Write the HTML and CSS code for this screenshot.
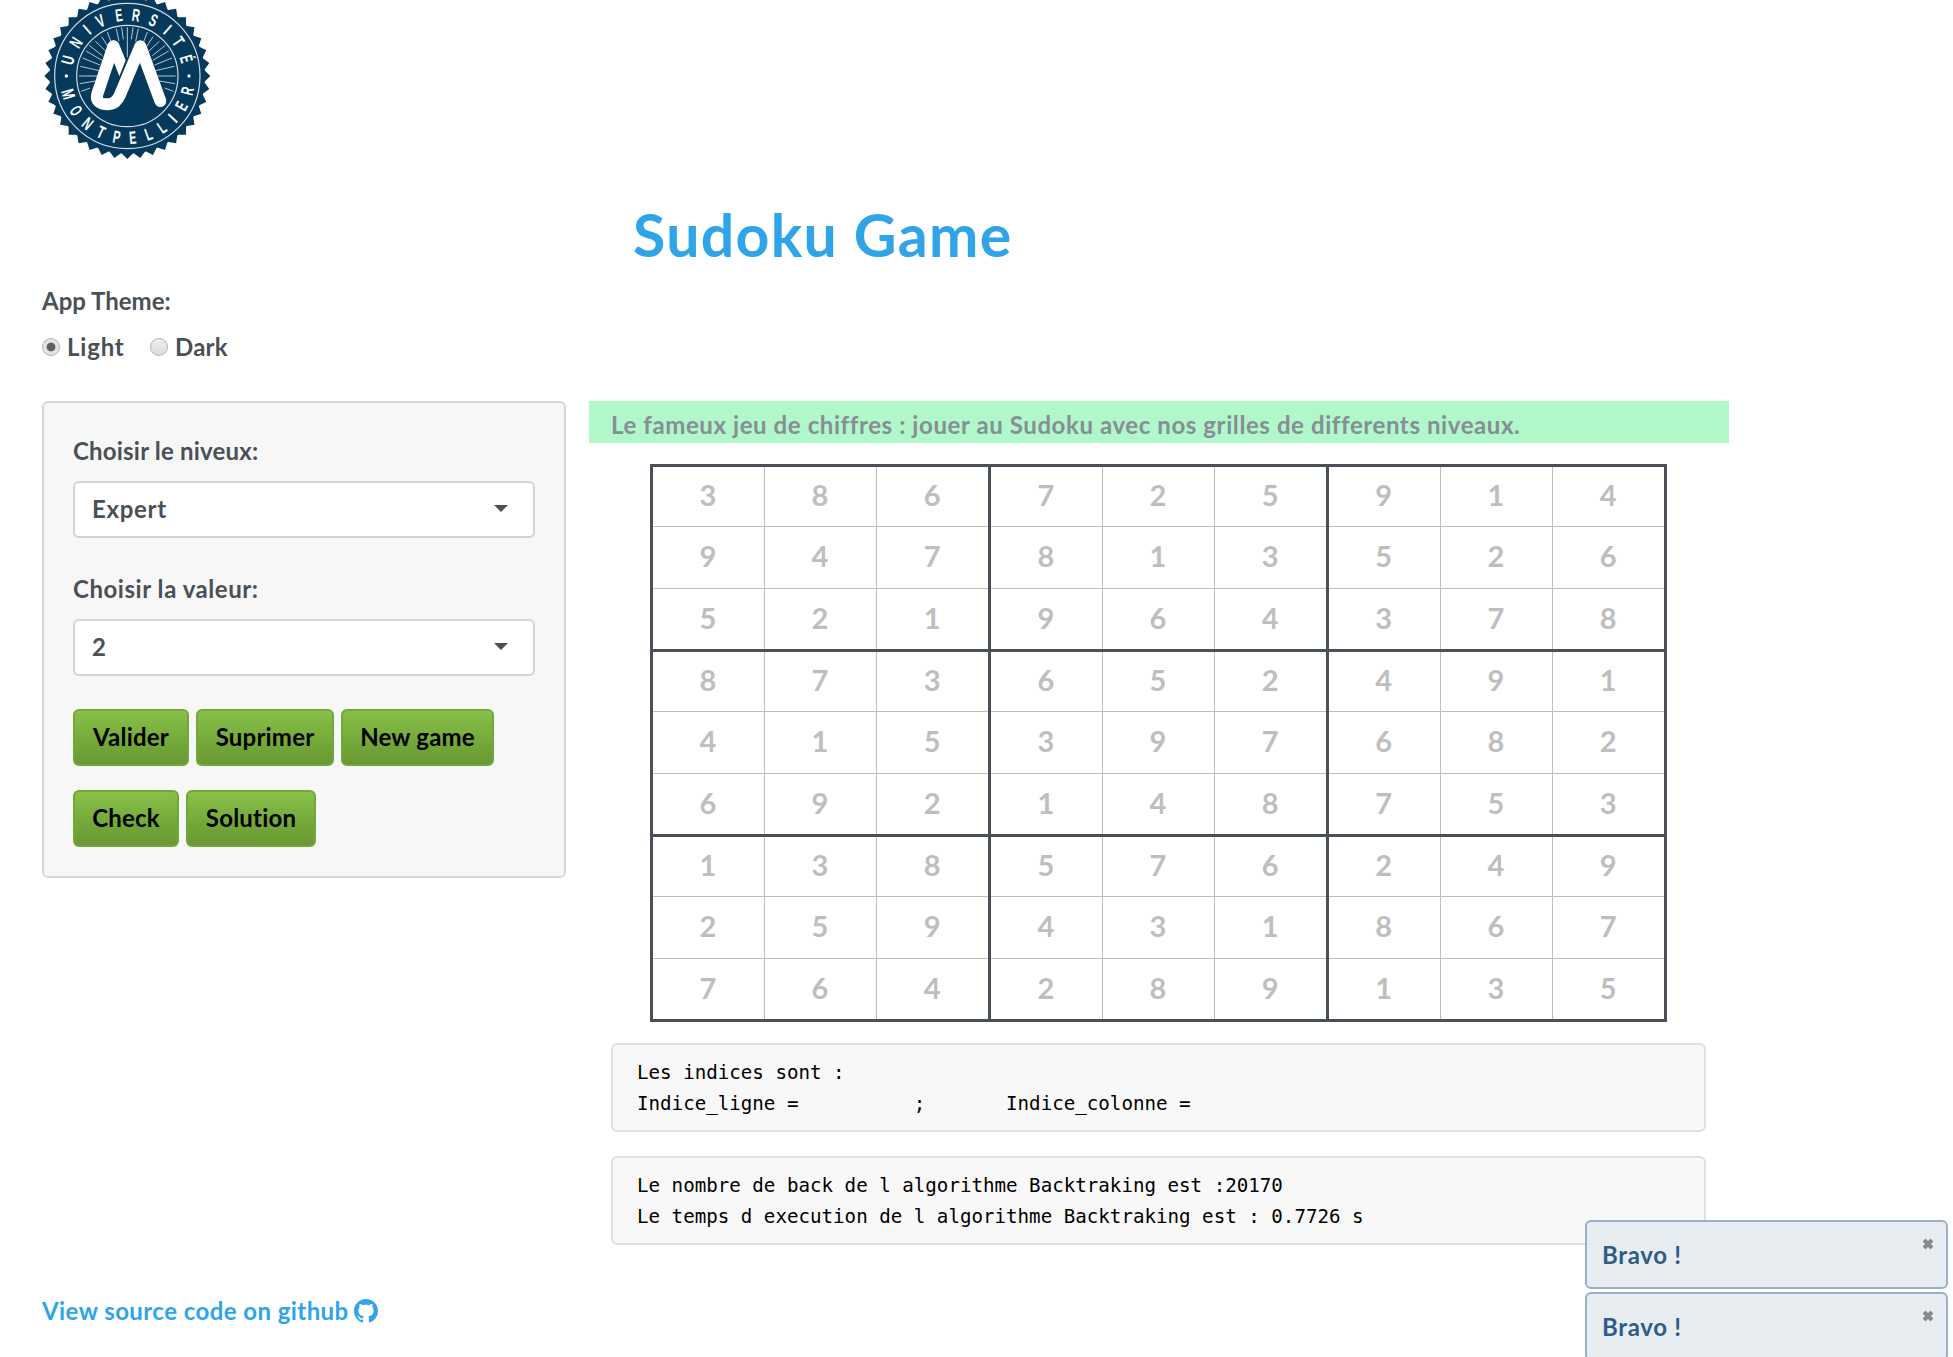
FILE: index.html
```html
<!DOCTYPE html>
<html lang="fr">
<head>
<meta charset="utf-8">
<title>Sudoku Game</title>
<link rel="stylesheet" href="styles.css">
</head>
<body>
<header class="brand">
<svg class="logo" viewBox="36 0 510 480" role="img" aria-label="Université Montpellier">
<g transform="translate(292 228)">
<g fill="#063a5c">
<circle r="233"/>
<path id="teeth" d="M0-249L249 0 0 249-249 0Z"/>
<use href="#teeth" transform="rotate(9)"/>
<use href="#teeth" transform="rotate(18)"/>
<use href="#teeth" transform="rotate(27)"/>
<use href="#teeth" transform="rotate(36)"/>
<use href="#teeth" transform="rotate(45)"/>
<use href="#teeth" transform="rotate(54)"/>
<use href="#teeth" transform="rotate(63)"/>
<use href="#teeth" transform="rotate(72)"/>
<use href="#teeth" transform="rotate(81)"/>
</g>
<g fill="none" stroke="#d5dde2" stroke-width="3.5"><circle r="218"/><circle r="152"/></g>
<path class="rays" d="M0-57V-146M25-104L33-142M-25-104L-33-142M12-110L17-146M-12-110L-17-146M48-100L60-132M-48-100L-60-132M58-88L77-118M-58-88L-77-118M64-74L96-104M-64-74L-96-104M75-61L114-92M-75-61L-114-92M76-47L124-75M-76-47L-124-75M82-33L134-54M-82-33L-134-54M84-16L141-29M-84-16L-141-29M90 0H145M-90 0H-145M96 15L143 23M-96 15L-143 23M112 36L138 46M-112 36L-138 46"/>
<circle cx="-183" r="5" fill="#fff"/><circle cx="185" r="5" fill="#fff"/>
<g class="seal-text">
<text transform="rotate(-75) translate(0 -166) scale(.66 1)">U</text>
<text transform="rotate(-57) translate(0 -166) scale(.66 1)">N</text>
<text transform="rotate(-41) translate(0 -166) scale(.7 1)">I</text>
<text transform="rotate(-26) translate(0 -166) scale(.66 1)">V</text>
<text transform="rotate(-8) translate(0 -166) scale(.6 1)">E</text>
<text transform="rotate(8) translate(0 -166) scale(.62 1)">R</text>
<text transform="rotate(25) translate(0 -166) scale(.62 1)">S</text>
<text transform="rotate(41) translate(0 -166) scale(.7 1)">I</text>
<text transform="rotate(56) translate(0 -166) scale(.66 1)">T</text>
<text transform="rotate(74) translate(0 -166) scale(.6 1)">É</text>
<text transform="rotate(73) translate(0 204) scale(.66 1)">M</text>
<text transform="rotate(56) translate(0 204) scale(.58 1)">O</text>
<text transform="rotate(40) translate(0 204) scale(.66 1)">N</text>
<text transform="rotate(25) translate(0 204) scale(.66 1)">T</text>
<text transform="rotate(10) translate(0 204) scale(.62 1)">P</text>
<text transform="rotate(-5) translate(0 204) scale(.6 1)">E</text>
<text transform="rotate(-20) translate(0 204) scale(.62 1)">L</text>
<text transform="rotate(-34) translate(0 204) scale(.62 1)">L</text>
<text transform="rotate(-47) translate(0 204) scale(.7 1)">I</text>
<text transform="rotate(-61) translate(0 204) scale(.6 1)">E</text>
<text transform="rotate(-76) translate(0 204) scale(.62 1)">R</text>
</g>
</g>
<path d="M250 139L202 282Q194 313 235 313Q259 311 270 284L331 139L391 303" fill="none" stroke="#fff" stroke-width="36" stroke-linecap="round" stroke-linejoin="round"/>
<path d="M250 121Q264 123 268 134L287 181 268 229 249 180Z" fill="#fff"/>
</svg>
</header>
<h1 class="title">Sudoku Game</h1>

<section class="theme">
<div class="label l-theme">App Theme:</div>
<div class="radios">
<label class="radio"><span class="dot on"></span><span class="t-light">Light</span></label>
<label class="radio"><span class="dot"></span><span class="t-dark">Dark</span></label>
</div>
</section>

<main class="layout">
<aside class="panel">
<div class="label l-level">Choisir le niveux:</div>
<div class="select"><span class="t-expert">Expert</span><svg class="caret" viewBox="0 0 14 7"><path d="M0 0h14L7 7z"/></svg></div>
<div class="label second l-value">Choisir la valeur:</div>
<div class="select"><span>2</span><svg class="caret" viewBox="0 0 14 7"><path d="M0 0h14L7 7z"/></svg></div>
<div class="buttons">
<button class="btn b-valider">Valider</button><button class="btn b-suprimer">Suprimer</button><button class="btn b-new">New game</button>
</div>
<div class="buttons">
<button class="btn b-check">Check</button><button class="btn b-solution">Solution</button>
</div>
</aside>

<section class="game">
<div class="banner">Le fameux jeu de chiffres : jouer au Sudoku avec nos grilles de differents niveaux.</div>
<table class="grid">
<tr><td>3</td><td>8</td><td>6</td><td>7</td><td>2</td><td>5</td><td>9</td><td>1</td><td>4</td></tr>
<tr><td>9</td><td>4</td><td>7</td><td>8</td><td>1</td><td>3</td><td>5</td><td>2</td><td>6</td></tr>
<tr><td>5</td><td>2</td><td>1</td><td>9</td><td>6</td><td>4</td><td>3</td><td>7</td><td>8</td></tr>
<tr><td>8</td><td>7</td><td>3</td><td>6</td><td>5</td><td>2</td><td>4</td><td>9</td><td>1</td></tr>
<tr><td>4</td><td>1</td><td>5</td><td>3</td><td>9</td><td>7</td><td>6</td><td>8</td><td>2</td></tr>
<tr><td>6</td><td>9</td><td>2</td><td>1</td><td>4</td><td>8</td><td>7</td><td>5</td><td>3</td></tr>
<tr><td>1</td><td>3</td><td>8</td><td>5</td><td>7</td><td>6</td><td>2</td><td>4</td><td>9</td></tr>
<tr><td>2</td><td>5</td><td>9</td><td>4</td><td>3</td><td>1</td><td>8</td><td>6</td><td>7</td></tr>
<tr><td>7</td><td>6</td><td>4</td><td>2</td><td>8</td><td>9</td><td>1</td><td>3</td><td>5</td></tr>
</table>
<pre class="output">Les indices sont :
Indice_ligne =          ;       Indice_colonne =</pre>
<pre class="output">Le nombre de back de l algorithme Backtraking est :20170
Le temps d execution de l algorithme Backtraking est : 0.7726 s</pre>
</section>
</main>

<footer class="footer"><a class="source"><span class="t-source">View source code on github</span><svg class="github" viewBox="0 0 16 16"><path d="M8 0C3.58 0 0 3.58 0 8c0 3.54 2.29 6.53 5.47 7.59.4.07.55-.17.55-.38 0-.19-.01-.82-.01-1.49-2.01.37-2.53-.49-2.69-.94-.09-.23-.48-.94-.82-1.13-.28-.15-.68-.52-.01-.53.63-.01 1.08.58 1.23.82.72 1.21 1.87.87 2.33.66.07-.52.28-.87.51-1.07-1.78-.2-3.64-.89-3.64-3.95 0-.87.31-1.59.82-2.15-.08-.2-.36-1.02.08-2.12 0 0 .67-.21 2.2.82.64-.18 1.32-.27 2-.27.68 0 1.36.09 2 .27 1.53-1.04 2.2-.82 2.2-.82.44 1.1.16 1.92.08 2.12.51.56.82 1.27.82 2.15 0 3.07-1.87 3.75-3.65 3.95.29.25.54.73.54 1.48 0 1.07-.01 1.93-.01 2.2 0 .21.15.46.55.38A8.013 8.013 0 0016 8c0-4.42-3.58-8-8-8z"/></svg></a></footer>

<div class="notifications">
<div class="note"><span>Bravo !</span><svg class="close" viewBox="0 0 12 12"><path d="M2 2l8 8M10 2l-8 8"/></svg></div>
<div class="note"><span>Bravo !</span><svg class="close" viewBox="0 0 12 12"><path d="M2 2l8 8M10 2l-8 8"/></svg></div>
</div>
</body>
</html>
```
FILE: styles.css
```css
* { box-sizing: border-box; }
html, body { height: 1357px; overflow: hidden; }
body {
  margin: 0;
  background: #fff;
  color: #495057;
  font: 700 24px/36px Lato, sans-serif;
  white-space: nowrap;
}
.brand { height: 160px; padding-left: 42px; }
.logo { display: block; width: 170px; height: 160px; }
.rays { stroke: #b9c8d1; stroke-width: 3; fill: none; }
.seal-text { fill: #fff; font: 700 53px "Liberation Sans", sans-serif; text-anchor: middle; }
.title {
  margin: 39px 0 0 633px;
  color: #2fa4e7;
  font-size: 59px;
  line-height: 71px;
  letter-spacing: 1.3px;
}
.theme { padding: 13px 0 0 42px; }
.radios { display: flex; gap: 25px; margin-top: 10px; }
.radio { display: flex; align-items: center; gap: 7px; }
.radio .t-light { width: 58px; letter-spacing: .8px; }
.t-dark { letter-spacing: .2px; }
.l-level { letter-spacing: .2px; }
.l-value { letter-spacing: .55px; }
.t-expert { letter-spacing: .7px; }
.dot {
  width: 18px;
  height: 18px;
  border: 1px solid #b4b4b4;
  border-radius: 50%;
  background: linear-gradient(#eee, #dcdcdc);
}
.dot.on { background: radial-gradient(circle, #606060 0 4px, #e3e3e3 4.8px); }
.layout {
  display: grid;
  grid-template-columns: 524px 1140px;
  gap: 23px;
  align-items: start;
  margin-top: 36px;
  padding-left: 42px;
}
.panel {
  padding: 30px 29px 29px;
  border: 2px solid #d5d6d8;
  border-radius: 6px;
  background: #f7f7f7;
}
.label.second { margin-top: 33px; }
.select {
  display: flex;
  align-items: center;
  justify-content: space-between;
  height: 57px;
  margin-top: 12px;
  padding: 0 25px 2px 17px;
  border: 2px solid #ced4da;
  border-radius: 6px;
  background: #fff;
}
.caret { width: 14px; height: 7px; fill: #495057; }
.buttons { display: flex; gap: 7px; margin-top: 33px; }
.buttons + .buttons { margin-top: 24px; }
.btn {
  height: 57px;
  padding: 0 0 2px;
  border: 2px solid #73a839;
  border-radius: 6px;
  background: linear-gradient(#88c149, #73a839 60%, #699934);
  color: #000;
  font: inherit;
  letter-spacing: .2px;
}
.b-valider { width: 116px; }
.b-suprimer { width: 138px; }
.b-new { width: 153px; }
.b-check { width: 106px; }
.b-solution { width: 130px; }
.banner {
  height: 42px;
  padding: 6px 0 0 22px;
  background: #b0f7c9;
  color: #868e96;
  letter-spacing: .59px;
}
.grid {
  width: 1017px;
  height: 558px;
  margin: 21px 0 0 61px;
  border: 3px solid #495057;
  border-collapse: collapse;
  table-layout: fixed;
  color: #bebebe;
  font-size: 29px;
}
.grid tr { height: 62px; }
.grid tr:nth-child(3n + 1) { height: 61px; }
.grid td {
  padding: 0 1px 3px 0;
  border: 1px solid #bebebe;
  text-align: center;
}
.grid td:nth-child(3n) { border-right: 3px solid #495057; }
.grid tr:nth-child(3n) td { border-bottom: 3px solid #495057; }
.output {
  width: 1095px;
  height: 89px;
  margin: 21px 0 0 22px;
  padding: 12px 24px;
  border: 2px solid #dee2e6;
  border-radius: 6px;
  background: #f8f8f8;
  color: #000;
  font: 400 19.16px/31px "DejaVu Sans Mono", monospace;
}
.output + .output { margin-top: 24px; }
.footer { margin-top: 48px; padding-left: 42px; color: #2fa4e7; }
.source { display: flex; align-items: center; }
.t-source { width: 312px; letter-spacing: .43px; }
.github { width: 24px; height: 24px; fill: currentColor; }
.notifications {
  position: absolute;
  left: 1585px;
  top: 1220px;
  display: grid;
  gap: 3px;
}
.note {
  display: flex;
  align-items: flex-start;
  justify-content: space-between;
  width: 363px;
  height: 69px;
  padding: 15px 12px 0 15px;
  border: 2px solid #9ab0ca;
  border-radius: 6px;
  background: rgba(230, 236, 240, .93);
  color: #2f5c88;
  letter-spacing: .7px;
}
.close { width: 12px; height: 12px; margin-top: 1px; stroke: #84898d; stroke-width: 4; }
```
